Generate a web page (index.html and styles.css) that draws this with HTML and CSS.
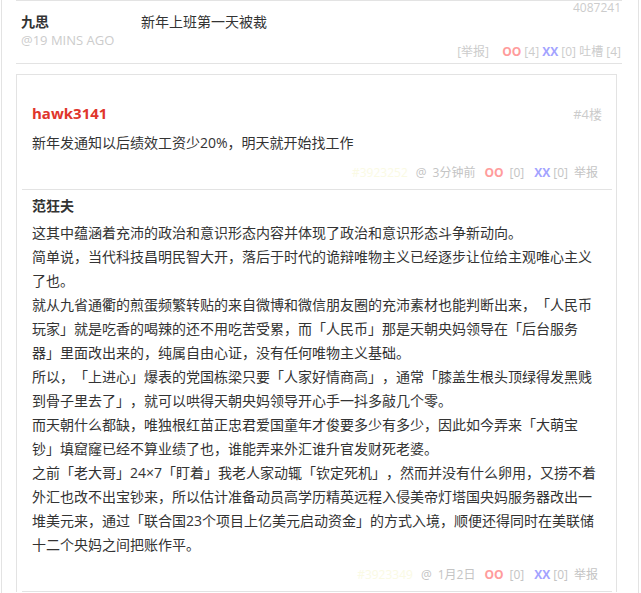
FILE: index.html
```html
<!DOCTYPE html>
<html>
  <head>
    <meta charset="UTF-8" />
    <title>新年上班第一天被裁</title>
    <link rel="stylesheet" href="styles.css">
  </head>
  <body>

    <div class="page">
      <div class="post">
        <div class="post-id">4087241</div>
        <div class="post-main">
          <div class="author">
            <div class="author-name">九思</div>
            <div class="author-time">@19 MINS AGO</div>
          </div>
          <div class="post-body">
            <div class="post-title">新年上班第一天被裁</div>
            <div class="post-footer">
              <span class="report">[举报]</span>
              <span class="oo">OO</span> [4]
              <span class="xx">XX</span> [0]
              吐槽 [4]
            </div>
          </div>
        </div>
      </div>

      <div class="comments">
        <div class="comment comment-first">
          <div class="comment-head">
            <span class="comment-author hot">hawk3141</span>
            <span class="floor">#4楼</span>
          </div>
          <p class="comment-text">新年发通知以后绩效工资少20%，明天就开始找工作</p>
          <div class="comment-footer">
            <span class="cid">#3923252</span>
            <span>@</span>
            <span class="time">3分钟前</span>
            <span class="oo">OO</span>
            <span class="count">[0]</span>
            <span class="xx">XX</span>
            <span class="count count-x">[0]</span>
            <span class="report">举报</span>
          </div>
        </div>

        <div class="comment">
          <div class="comment-head">
            <span class="comment-author">范狂夫</span>
          </div>
          <p class="comment-text">这其中蕴涵着充沛的政治和意识形态内容并体现了政治和意识形态斗争新动向。<br>简单说，当代科技昌明民智大开，落后于时代的诡辩唯物主义已经逐步让位给主观唯心主义了也。<br>就从九省通衢的煎蛋频繁转贴的来自微博和微信朋友圈的充沛素材也能判断出来，「人民币玩家」就是吃香的喝辣的还不用吃苦受累，而「人民币」那是天朝央妈领导在「后台服务器」里面改出来的，纯属自由心证，没有任何唯物主义基础。<br>所以，「上进心」爆表的党国栋梁只要「人家好情商高」，通常「膝盖生根头顶绿得发黑贱到骨子里去了」，就可以哄得天朝央妈领导开心手一抖多敲几个零。<br>而天朝什么都缺，唯独根红苗正忠君爱国童年才俊要多少有多少，因此如今弄来「大萌宝钞」填窟窿已经不算业绩了也，谁能弄来外汇谁升官发财死老婆。<br>之前「老大哥」24×7「盯着」我老人家动辄「钦定死机」，然而并没有什么卵用，又捞不着外汇也改不出宝钞来，所以估计准备动员高学历精英远程入侵美帝灯塔国央妈服务器改出一堆美元来，通过「联合国23个项目上亿美元启动资金」的方式入境，顺便还得同时在美联储十二个央妈之间把账作平。</p>
          <div class="comment-footer">
            <span class="cid">#3923349</span>
            <span>@</span>
            <span class="time">1月2日</span>
            <span class="oo">OO</span>
            <span class="count">[0]</span>
            <span class="xx">XX</span>
            <span class="count count-x">[0]</span>
            <span class="report">举报</span>
          </div>
        </div>
      </div>
    </div>

  </body>
</html>
```

FILE: styles.css
```css
html, body {
  overflow: hidden;
}

body {
  margin: 0;
  font-family: "Open Sans", "Noto Sans CJK SC", sans-serif;
  color: #333;
  background: #fff;
  text-spacing-trim: space-all;
}

.page {
  box-sizing: border-box;
  width: 638px;
  min-height: 100vh;
  margin-left: 1px;
  padding: 0 16px 0 14px;
  border-left: 1px solid #e3e3e3;
  border-right: 1px solid #e3e3e3;
}

/* post header */
.post {
  border-top: 1px solid #e3e3e3;
  border-bottom: 1px solid #e3e3e3;
  padding-bottom: 3px;
}

.post-id {
  text-align: right;
  font-size: 12px;
  line-height: 14px;
  margin-bottom: -2px;
  color: #ccc;
  padding-right: 1px;
}

.post-main {
  display: flex;
  padding-left: 5px;
}

.author {
  width: 120px;
  flex-shrink: 0;
}

.author-name {
  font-size: 14px;
  line-height: 18px;
  font-weight: bold;
}

.author-time {
  font-size: 13px;
  line-height: 18px;
  color: #ccc;
}

.post-body {
  flex: 1;
}

.post-title {
  font-size: 14px;
  line-height: 18px;
}

.post-footer {
  margin-top: 13px;
  text-align: right;
  font-size: 12px;
  line-height: 16px;
  color: #ccc;
  padding-right: 1px;
}

.post-footer .report {
  margin-right: 10px;
}

.oo {
  color: #ff9c9c;
  font-weight: bold;
}

.xx {
  color: #a3a3ff;
  font-weight: bold;
}

/* comments */
.comments {
  box-sizing: border-box;
  width: 601px;
  margin-top: 10px;
  border: 1px solid #e3e3e3;
  border-bottom: none;
}

.comment {
  margin: 0 4px 0 5px;
  padding: 5px 10px 6px;
  border-bottom: 1px solid #e3e3e3;
}

.comment-first {
  padding-top: 28px;
}

.comment-head {
  display: flex;
  justify-content: space-between;
  align-items: center;
  height: 20px;
}

.comment-author {
  font-size: 14px;
  font-weight: bold;
  color: #333;
}

.comment-author.hot {
  font-size: 15px;
  color: #e0352b;
}

.floor {
  font-size: 13px;
  color: #ccc;
}

.comment-text {
  margin: 8px 0 0;
  font-size: 14px;
  line-height: 24px;
}

.comment + .comment .comment-text {
  margin-top: 6px;
}

.comment-footer {
  display: flex;
  justify-content: flex-end;
  gap: 6px;
  margin-top: 8px;
  padding-right: 4px;
  font-size: 12px;
  line-height: 20px;
  color: #c4c4c4;
}

.comment-footer .cid {
  color: #fafae4;
  margin-right: 2px;
}

.comment-footer .oo {
  margin-left: 3px;
}

.comment-footer .xx {
  margin-left: 4px;
}

.comment-footer .count-x {
  margin-left: -3px;
}
```
